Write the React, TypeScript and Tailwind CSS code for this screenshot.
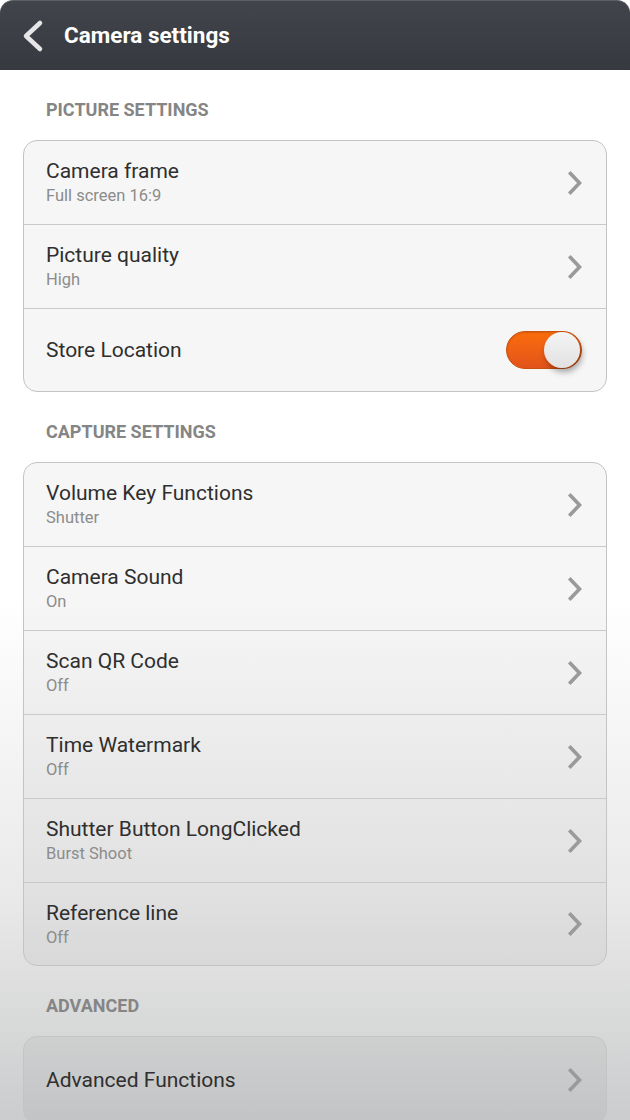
import React from "react";

const Chevron = () => (
  <svg width="20" height="28" viewBox="0 0 20 28" className="shrink-0">
    <path d="M5.5 4.5 L14.5 14 L5.5 23.5" fill="none" stroke="#9a9a9a" strokeWidth="3.6" strokeLinecap="square" strokeLinejoin="miter" />
  </svg>
);

type Item = { title: string; sub?: string; toggle?: boolean };

const Row = ({ item, last, tall }: { item: Item; last: boolean; tall?: boolean }) => (
  <div
    className={`flex items-center pl-[22px] pr-[21px] ${last ? (tall ? "h-[86px]" : "h-[82px]") : "h-[84px] border-b border-[#c9c9c9]"}`}
  >
    <div className="flex flex-1 flex-col">
      <div className="text-[21px] leading-[24px] text-[#2f2f2f]">{item.title}</div>
      {item.sub && <div className="mt-[3px] text-[16.5px] leading-[20px] text-[#8c8c8c]">{item.sub}</div>}
    </div>
    {item.toggle ? (
      <div className="relative mr-[3px] h-[38px] w-[76px] rounded-full border border-[#c9520f] bg-[linear-gradient(180deg,#fb6d0c,#e2531b)] shadow-[inset_0_1px_2px_rgba(0,0,0,0.15)]">
        <div className="absolute right-[1px] top-[0px] h-[36px] w-[36px] rounded-full bg-[linear-gradient(180deg,#f4f4f4,#e2e2e2)] shadow-[2px_4px_6px_rgba(0,0,0,0.35)]" />
      </div>
    ) : (
      <Chevron />
    )}
  </div>
);

const Card = ({ items, tall }: { items: Item[]; tall?: boolean }) => (
  <div className="mx-[23px] overflow-hidden rounded-[14px] border border-[#c4c4c4] bg-black/[0.035]">
    {items.map((it, i) => (
      <Row key={it.title} item={it} last={i === items.length - 1} tall={tall} />
    ))}
  </div>
);

const Section = ({ label }: { label: string }) => (
  <div className="h-[70px] pl-[46px] pt-[29px] text-[18px] font-bold leading-[22px] text-[#858585]">
    {label}
  </div>
);

export default function App() {
  return (
    <div
      className="h-[1120px] w-[630px] overflow-hidden bg-[linear-gradient(180deg,#ffffff_0px,#ffffff_600px,#e9e9e9_900px,#cbcccd_1120px)]"
      style={{ fontFamily: "Roboto, 'Noto Sans', sans-serif" }}
    >
      <div className="flex h-[70px] items-center rounded-t-[13px] border-t border-[#5b5e65] bg-[linear-gradient(180deg,#41444b,#363940)]">
        <svg width="26" height="34" viewBox="0 0 26 34" className="ml-[20px]">
          <path d="M20 4 L6 17 L20 30" fill="none" stroke="#e6e6e6" strokeWidth="4.5" strokeLinecap="round" strokeLinejoin="round" />
        </svg>
        <div className="ml-[18px] text-[22.5px] font-bold text-white">Camera settings</div>
      </div>
      <Section label="PICTURE SETTINGS" />
      <Card
        items={[
          { title: "Camera frame", sub: "Full screen 16:9" },
          { title: "Picture quality", sub: "High" },
          { title: "Store Location", toggle: true },
        ]}
      />
      <Section label="CAPTURE SETTINGS" />
      <Card
        items={[
          { title: "Volume Key Functions", sub: "Shutter" },
          { title: "Camera Sound", sub: "On" },
          { title: "Scan QR Code", sub: "Off" },
          { title: "Time Watermark", sub: "Off" },
          { title: "Shutter Button LongClicked", sub: "Burst Shoot" },
          { title: "Reference line", sub: "Off" },
        ]}
      />
      <Section label="ADVANCED" />
      <Card items={[{ title: "Advanced Functions" }]} tall />
    </div>
  );
}
